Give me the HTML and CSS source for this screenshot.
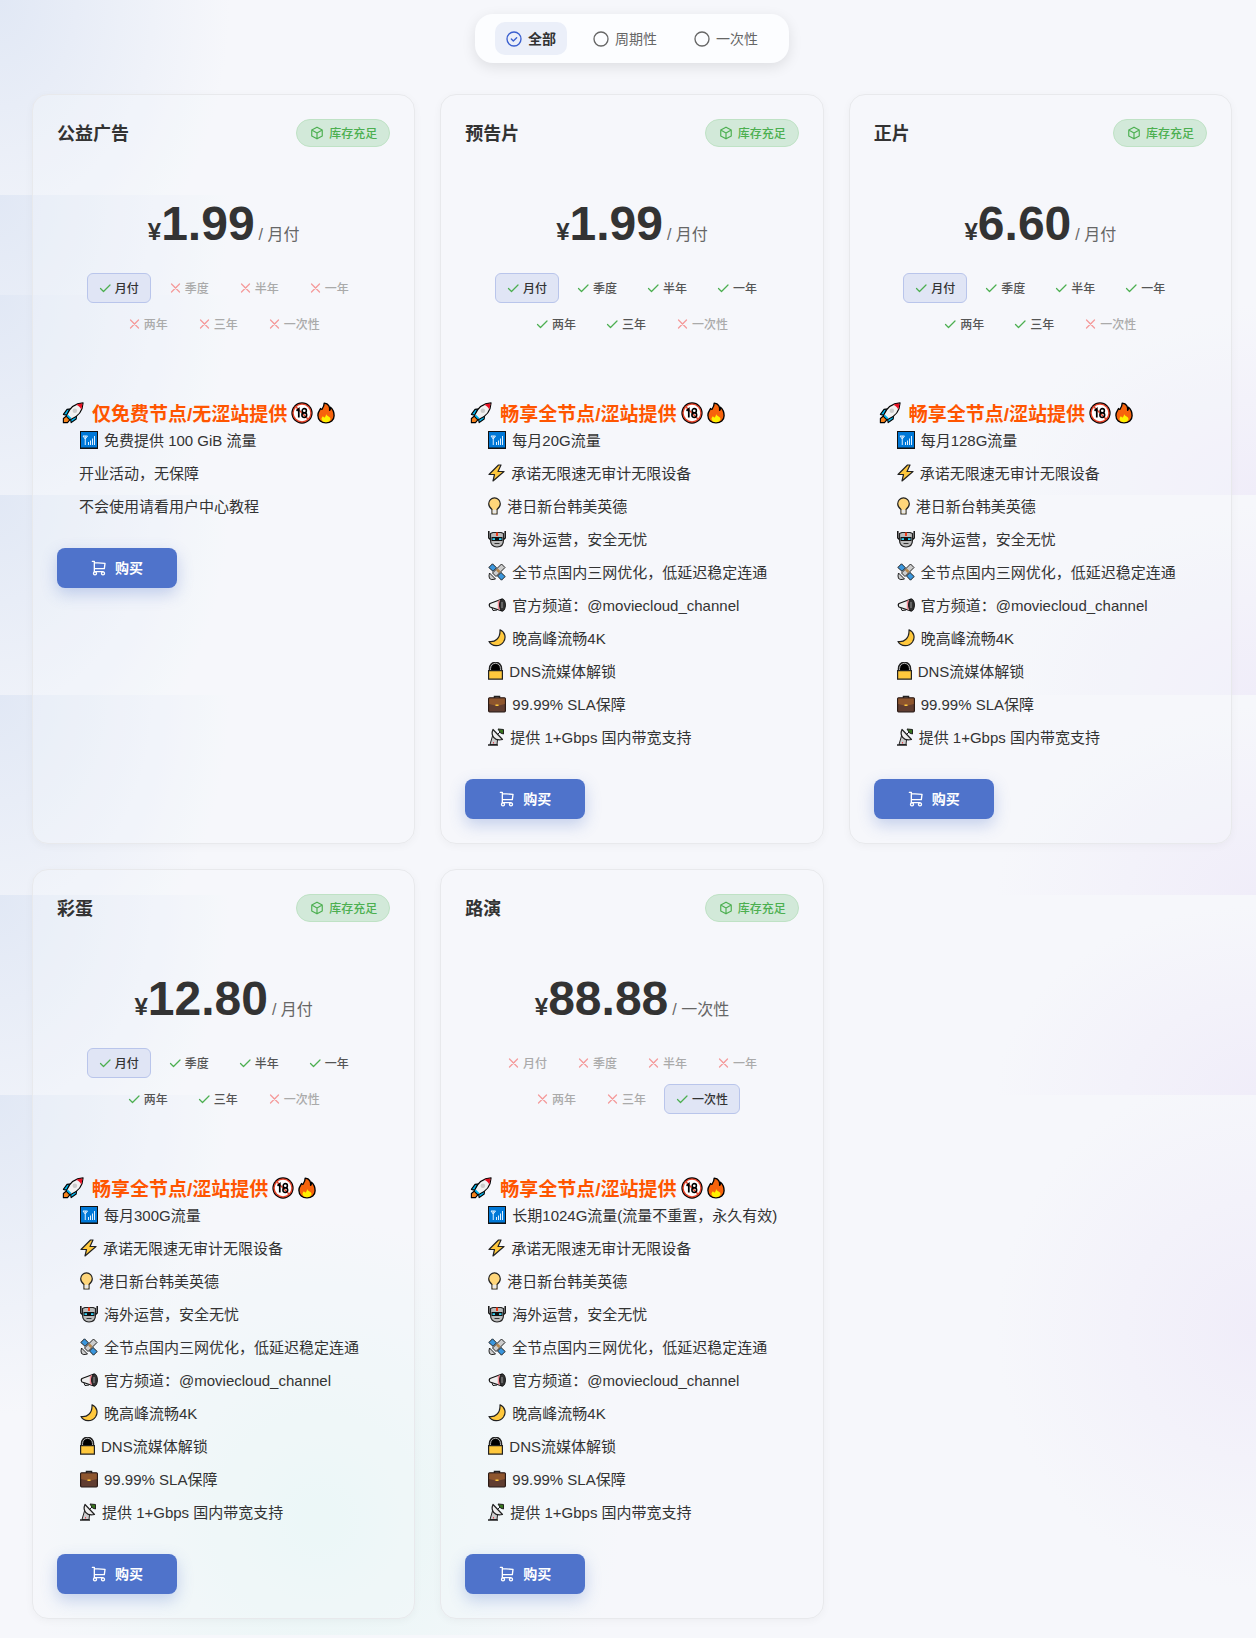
FILE: index.html
```html
<!DOCTYPE html>
<html lang="zh-CN">
<head>
    <meta charset="UTF-8">
    <meta name="viewport" content="width=device-width, initial-scale=1.0">
    <title>购买订阅</title>
    <link rel="stylesheet" href="styles.css">
</head>
<body>
    <!-- icon sprite -->
    <svg class="sprite" aria-hidden="true">
        <symbol id="i-circle" viewBox="0 0 24 24"><circle cx="12" cy="12" r="10.5"/></symbol>
        <symbol id="i-circle-check" viewBox="0 0 24 24"><circle cx="12" cy="12" r="10.5"/><path d="M8 12l3 3l5-5"/></symbol>
        <symbol id="i-check" viewBox="0 0 24 24"><path d="M3 13l6 6l13-13"/></symbol>
        <symbol id="i-x" viewBox="0 0 24 24"><path d="M21 4L5 20M5 4l16 16"/></symbol>
        <symbol id="i-box" viewBox="0 0 24 24"><path d="M12 2l9 5v10l-9 5l-9-5V7zM12 12l9-5M12 12v10M12 12L3 7"/></symbol>
        <symbol id="i-cart" viewBox="0 0 24 24"><circle cx="6" cy="20" r="2.3"/><circle cx="18" cy="20" r="2.3"/><path d="M18 17.500H5V2H2M5 4l16 1l-1 8H5"/></symbol>

        <symbol id="e-rocket" viewBox="0 0 24 24">
            <path d="M10 7.500L5.500 8L1.500 13.500L7 15zM16 14L15.500 18.500L10 22.500L9 17z" fill="#00b7f0" stroke="#000" stroke-width="1.200" stroke-linejoin="round"/>
            <path d="M4.500 15.500L1.500 18V22.500H6L8.500 19.500z" fill="#f7831c" stroke="#000" stroke-width="1.200" stroke-linejoin="round"/>
            <path d="M5 14.500C8 7 13 1.500 23 1C22.500 11 17 16 9.500 19z" fill="#f2f2f2" stroke="#000" stroke-width="1.200" stroke-linejoin="round"/>
            <path d="M15.500 3Q19 1.700 22.300 1.700Q22 5 21 8.500Q20 5 15.500 3Z" fill="#e81123"/>
            <circle cx="14" cy="9.500" r="2.500" fill="#ccc"/>
            <path d="M5.800 14.500L9.500 18.200" stroke="#00b7f0" stroke-width="2"/>
        </symbol>
        <symbol id="e-adult" viewBox="0 0 24 24">
            <circle cx="12" cy="12" r="11.600" fill="#000"/><circle cx="12" cy="12" r="10.600" fill="#e2432a"/><circle cx="12" cy="12" r="9" fill="#fff"/>
            <path d="M5.500 5.500L18.500 18.500" stroke="#e2432a" stroke-width="1.600"/>
            <path d="M6 9.500L8.500 7.500V17" fill="none" stroke="#000" stroke-width="1.900"/>
            <circle cx="14.500" cy="9.500" r="2.300" fill="none" stroke="#000" stroke-width="1.700"/><circle cx="14.500" cy="14.300" r="2.600" fill="none" stroke="#000" stroke-width="1.700"/>
        </symbol>
        <symbol id="e-fire" viewBox="0 0 20 24">
            <path d="M8 1C13 1.500 14.500 5 14 9C15 8.500 15 6.500 15 5.500C18 8 19 12 19 15C19 20 15 23 10 23C5 23 1 20 1 14.500C1 11 3 9 4 7C4.500 8 5 8 5.500 8C7 6 8 4 8 1Z" fill="#f7630c" stroke="#000" stroke-width="1.500" stroke-linejoin="round"/>
            <path d="M10 13C11 15.500 15 16 15 18.500C15 21 13 22.200 10 22.200C7 22.200 5 21 5 18.500C5 17 6 16.500 6.500 15.500C7.500 16.500 8 17 8.500 17C9.500 15.500 10 15 10 13Z" fill="#fff100"/>
        </symbol>
        <symbol id="e-signal" viewBox="0 0 18 18">
            <path d="M0 0H18V18H0z" fill="#111"/><path d="M1 1H17V16.500H1z" fill="#0078d7"/>
            <path d="M3 5H7.500M5.250 5V14M3 5L5.250 8L7.500 5M8.500 14V11M10.500 14V9.500M12.500 14V7.500M14.500 14V5" fill="none" stroke="#dff0ff"/>
        </symbol>
        <symbol id="e-bolt" viewBox="0 0 17 18"><path d="M10.500 1L1 10.500H6.500L5 17L16 7.500H10L13 1z" fill="#ffc83d" stroke="#222" stroke-width="1.200" stroke-linejoin="round"/></symbol>
        <symbol id="e-bulb" viewBox="0 0 13 18">
            <path d="M4 17V12.500C1.500 10.500 .7 9 .7 6.800A5.800 6 0 0 1 12.300 6.800C12.300 9 11.500 10.500 9 12.500V17z" fill="#ffd67a" stroke="#222" stroke-width="1.200"/>
            <path d="M4.600 12.700H8.400V16.400H4.600z" fill="#e8e8e8"/>
        </symbol>
        <symbol id="e-robot" viewBox="0 0 18 18">
            <path d="M.8 1V8L3 10M17.200 1V8L15 10" fill="none" stroke="#111" stroke-width="1.500"/>
            <path d="M2.500 3.500L5 2.500H13L15.500 3.500V10C15.500 14.500 13 17 9 17C5 17 2.500 14.500 2.500 10z" fill="#bbb" stroke="#222" stroke-width="1.200" stroke-linejoin="round"/>
            <path d="M3.500 7H14.500V11H3.500z" fill="#111"/><path d="M4.500 8.200H7V10H4.500zM11 8.200H13.500V10H11z" fill="#31d2f7"/>
            <path d="M8 2.500H10V6H8z" fill="#f03a17"/><path d="M6.500 13.500H11.500" stroke="#333"/>
        </symbol>
        <symbol id="e-satellite" viewBox="0 0 18 18">
            <path d="M4.500 .8L8.500 4.800L5 8.300L.8 4.500zM13 9.500L17.200 13.500L13.500 17.200L9.500 13z" fill="#3a96dd" stroke="#222" stroke-linejoin="round"/>
            <path d="M13.500 1L17 4.500L8 13.500L4.500 10zM1.500 10L7.500 16Q3 17.500 1.500 15.500Q.5 13 1.500 10z" fill="#ccc" stroke="#222" stroke-linejoin="round"/>
            <path d="M9 6.500L11.500 9" stroke="#b8874b" stroke-width="2.500"/>
        </symbol>
        <symbol id="e-horn" viewBox="0 0 18 18">
            <path d="M14 3L2 7.500Q.5 9 2 11L14 15z" fill="#eee" stroke="#111" stroke-width="1.200" stroke-linejoin="round"/>
            <path d="M4 12L5 14.500L9 14" fill="none" stroke="#111"/><path d="M9.800 5L12.500 4V14L9.800 13z" fill="#f38b95"/>
            <ellipse cx="14.500" cy="9" rx="2.900" ry="6" fill="#333" stroke="#111"/><path d="M14 6V12" stroke="#999"/>
        </symbol>
        <symbol id="e-moon" viewBox="0 0 18 18"><path d="M12 .8C17 3 18.500 8.500 15.500 13C12 18 4 18 1 12.500C7 13.500 12.500 9.500 12 .8Z" fill="#ffc83d" stroke="#222" stroke-width="1.200" stroke-linejoin="round"/></symbol>
        <symbol id="e-lock" viewBox="0 0 15 18">
            <path d="M2 9V6.500A5.500 5.800 0 0 1 13 6.500V9" fill="#000" stroke="#222" stroke-width="2.500"/><path d="M2.500 8.500V6.500A5 5.200 0 0 1 12.500 6.500V8.500" fill="none" stroke="#aaa"/>
            <path d="M.6 8.600H14.400V17.200H.6z" fill="#ffc83d" stroke="#222" stroke-width="1.200"/>
        </symbol>
        <symbol id="e-case" viewBox="0 0 18 18">
            <path d="M6.500 4V1.500H11.500V4" fill="none" stroke="#222" stroke-width="1.500"/>
            <rect x=".6" y="2.800" width="16.800" height="14" rx="1" fill="#603d30" stroke="#2b1a14" stroke-width="1.200"/>
            <path d="M1.200 3.500H16.800V9L9 11L1.200 9z" fill="#8e562e"/><path d="M7.500 9.500H10.500V11H7.500z" fill="#ffc83d"/>
        </symbol>
        <symbol id="e-dish" viewBox="0 0 16 18">
            <path d="M4.500 8L2 16.500H9L9.500 12z" fill="#ccc" stroke="#222" stroke-linejoin="round"/>
            <path d="M5 1.500C2.500 7 6 13.500 14.500 11.500z" fill="#eee" stroke="#222" stroke-width="1.200" stroke-linejoin="round"/>
            <path d="M9 7L12 4" stroke="#222"/><path d="M10 1L15.500 1.500V6L12.500 5z" fill="#38761d" stroke="#222"/><path d="M0 17H10" stroke="#222" stroke-width="1.500"/><path d="M5.500 14V15.500" stroke="#e74856"/>
        </symbol>
    </svg>

    <form class="filter">
        <label class="filter-item active"><input type="radio" name="type" checked><svg class="icon"><use href="#i-circle-check"/></svg><span>全部</span></label>
        <label class="filter-item"><input type="radio" name="type"><svg class="icon"><use href="#i-circle"/></svg><span>周期性</span></label>
        <label class="filter-item"><input type="radio" name="type"><svg class="icon"><use href="#i-circle"/></svg><span>一次性</span></label>
    </form>

    <main class="plans">
        <section class="card">
            <header class="card-header">
                <h2>公益广告</h2>
                <span class="stock"><svg class="icon"><use href="#i-box"/></svg><span>库存充足</span></span>
            </header>
            <div class="price"><span class="currency">¥</span><span class="amount">1.99</span><span class="cycle">/ 月付</span></div>
            <div class="periods">
                <button class="period selected"><svg class="icon"><use href="#i-check"/></svg><span>月付</span></button>
                <button class="period" disabled><svg class="icon"><use href="#i-x"/></svg><span>季度</span></button>
                <button class="period" disabled><svg class="icon"><use href="#i-x"/></svg><span>半年</span></button>
                <button class="period" disabled><svg class="icon"><use href="#i-x"/></svg><span>一年</span></button>
                <button class="period" disabled><svg class="icon"><use href="#i-x"/></svg><span>两年</span></button>
                <button class="period" disabled><svg class="icon"><use href="#i-x"/></svg><span>三年</span></button>
                <button class="period" disabled><svg class="icon"><use href="#i-x"/></svg><span>一次性</span></button>
            </div>
            <h3><svg class="emoji-lg rocket"><use href="#e-rocket"/></svg>仅免费节点/无涩站提供<svg class="emoji-lg"><use href="#e-adult"/></svg><svg class="emoji-lg fire"><use href="#e-fire"/></svg></h3>
            <ul class="features">
                <li><svg class="emoji"><use href="#e-signal"/></svg>免费提供 100 GiB 流量</li>
                <li>开业活动，无保障</li>
                <li>不会使用请看用户中心教程</li>
            </ul>
            <button class="buy"><svg class="icon"><use href="#i-cart"/></svg><span>购买</span></button>
        </section>

        <section class="card">
            <header class="card-header">
                <h2>预告片</h2>
                <span class="stock"><svg class="icon"><use href="#i-box"/></svg><span>库存充足</span></span>
            </header>
            <div class="price"><span class="currency">¥</span><span class="amount">1.99</span><span class="cycle">/ 月付</span></div>
            <div class="periods">
                <button class="period selected"><svg class="icon"><use href="#i-check"/></svg><span>月付</span></button>
                <button class="period"><svg class="icon"><use href="#i-check"/></svg><span>季度</span></button>
                <button class="period"><svg class="icon"><use href="#i-check"/></svg><span>半年</span></button>
                <button class="period"><svg class="icon"><use href="#i-check"/></svg><span>一年</span></button>
                <button class="period"><svg class="icon"><use href="#i-check"/></svg><span>两年</span></button>
                <button class="period"><svg class="icon"><use href="#i-check"/></svg><span>三年</span></button>
                <button class="period" disabled><svg class="icon"><use href="#i-x"/></svg><span>一次性</span></button>
            </div>
            <h3><svg class="emoji-lg rocket"><use href="#e-rocket"/></svg>畅享全节点/涩站提供<svg class="emoji-lg"><use href="#e-adult"/></svg><svg class="emoji-lg fire"><use href="#e-fire"/></svg></h3>
            <ul class="features">
                <li><svg class="emoji"><use href="#e-signal"/></svg>每月20G流量</li>
                <li><svg class="emoji bolt"><use href="#e-bolt"/></svg>承诺无限速无审计无限设备</li>
                <li><svg class="emoji bulb"><use href="#e-bulb"/></svg>港日新台韩美英德</li>
                <li><svg class="emoji"><use href="#e-robot"/></svg>海外运营，安全无忧</li>
                <li><svg class="emoji"><use href="#e-satellite"/></svg>全节点国内三网优化，低延迟稳定连通</li>
                <li><svg class="emoji"><use href="#e-horn"/></svg>官方频道：@moviecloud_channel</li>
                <li><svg class="emoji"><use href="#e-moon"/></svg>晚高峰流畅4K</li>
                <li><svg class="emoji lock"><use href="#e-lock"/></svg>DNS流媒体解锁</li>
                <li><svg class="emoji"><use href="#e-case"/></svg>99.99% SLA保障</li>
                <li><svg class="emoji dish"><use href="#e-dish"/></svg>提供 1+Gbps 国内带宽支持</li>
            </ul>
            <button class="buy"><svg class="icon"><use href="#i-cart"/></svg><span>购买</span></button>
        </section>

        <section class="card">
            <header class="card-header">
                <h2>正片</h2>
                <span class="stock"><svg class="icon"><use href="#i-box"/></svg><span>库存充足</span></span>
            </header>
            <div class="price"><span class="currency">¥</span><span class="amount">6.60</span><span class="cycle">/ 月付</span></div>
            <div class="periods">
                <button class="period selected"><svg class="icon"><use href="#i-check"/></svg><span>月付</span></button>
                <button class="period"><svg class="icon"><use href="#i-check"/></svg><span>季度</span></button>
                <button class="period"><svg class="icon"><use href="#i-check"/></svg><span>半年</span></button>
                <button class="period"><svg class="icon"><use href="#i-check"/></svg><span>一年</span></button>
                <button class="period"><svg class="icon"><use href="#i-check"/></svg><span>两年</span></button>
                <button class="period"><svg class="icon"><use href="#i-check"/></svg><span>三年</span></button>
                <button class="period" disabled><svg class="icon"><use href="#i-x"/></svg><span>一次性</span></button>
            </div>
            <h3><svg class="emoji-lg rocket"><use href="#e-rocket"/></svg>畅享全节点/涩站提供<svg class="emoji-lg"><use href="#e-adult"/></svg><svg class="emoji-lg fire"><use href="#e-fire"/></svg></h3>
            <ul class="features">
                <li><svg class="emoji"><use href="#e-signal"/></svg>每月128G流量</li>
                <li><svg class="emoji bolt"><use href="#e-bolt"/></svg>承诺无限速无审计无限设备</li>
                <li><svg class="emoji bulb"><use href="#e-bulb"/></svg>港日新台韩美英德</li>
                <li><svg class="emoji"><use href="#e-robot"/></svg>海外运营，安全无忧</li>
                <li><svg class="emoji"><use href="#e-satellite"/></svg>全节点国内三网优化，低延迟稳定连通</li>
                <li><svg class="emoji"><use href="#e-horn"/></svg>官方频道：@moviecloud_channel</li>
                <li><svg class="emoji"><use href="#e-moon"/></svg>晚高峰流畅4K</li>
                <li><svg class="emoji lock"><use href="#e-lock"/></svg>DNS流媒体解锁</li>
                <li><svg class="emoji"><use href="#e-case"/></svg>99.99% SLA保障</li>
                <li><svg class="emoji dish"><use href="#e-dish"/></svg>提供 1+Gbps 国内带宽支持</li>
            </ul>
            <button class="buy"><svg class="icon"><use href="#i-cart"/></svg><span>购买</span></button>
        </section>

        <section class="card">
            <header class="card-header">
                <h2>彩蛋</h2>
                <span class="stock"><svg class="icon"><use href="#i-box"/></svg><span>库存充足</span></span>
            </header>
            <div class="price"><span class="currency">¥</span><span class="amount">12.80</span><span class="cycle">/ 月付</span></div>
            <div class="periods">
                <button class="period selected"><svg class="icon"><use href="#i-check"/></svg><span>月付</span></button>
                <button class="period"><svg class="icon"><use href="#i-check"/></svg><span>季度</span></button>
                <button class="period"><svg class="icon"><use href="#i-check"/></svg><span>半年</span></button>
                <button class="period"><svg class="icon"><use href="#i-check"/></svg><span>一年</span></button>
                <button class="period"><svg class="icon"><use href="#i-check"/></svg><span>两年</span></button>
                <button class="period"><svg class="icon"><use href="#i-check"/></svg><span>三年</span></button>
                <button class="period" disabled><svg class="icon"><use href="#i-x"/></svg><span>一次性</span></button>
            </div>
            <h3><svg class="emoji-lg rocket"><use href="#e-rocket"/></svg>畅享全节点/涩站提供<svg class="emoji-lg"><use href="#e-adult"/></svg><svg class="emoji-lg fire"><use href="#e-fire"/></svg></h3>
            <ul class="features">
                <li><svg class="emoji"><use href="#e-signal"/></svg>每月300G流量</li>
                <li><svg class="emoji bolt"><use href="#e-bolt"/></svg>承诺无限速无审计无限设备</li>
                <li><svg class="emoji bulb"><use href="#e-bulb"/></svg>港日新台韩美英德</li>
                <li><svg class="emoji"><use href="#e-robot"/></svg>海外运营，安全无忧</li>
                <li><svg class="emoji"><use href="#e-satellite"/></svg>全节点国内三网优化，低延迟稳定连通</li>
                <li><svg class="emoji"><use href="#e-horn"/></svg>官方频道：@moviecloud_channel</li>
                <li><svg class="emoji"><use href="#e-moon"/></svg>晚高峰流畅4K</li>
                <li><svg class="emoji lock"><use href="#e-lock"/></svg>DNS流媒体解锁</li>
                <li><svg class="emoji"><use href="#e-case"/></svg>99.99% SLA保障</li>
                <li><svg class="emoji dish"><use href="#e-dish"/></svg>提供 1+Gbps 国内带宽支持</li>
            </ul>
            <button class="buy"><svg class="icon"><use href="#i-cart"/></svg><span>购买</span></button>
        </section>

        <section class="card">
            <header class="card-header">
                <h2>路演</h2>
                <span class="stock"><svg class="icon"><use href="#i-box"/></svg><span>库存充足</span></span>
            </header>
            <div class="price"><span class="currency">¥</span><span class="amount">88.88</span><span class="cycle">/ 一次性</span></div>
            <div class="periods">
                <button class="period" disabled><svg class="icon"><use href="#i-x"/></svg><span>月付</span></button>
                <button class="period" disabled><svg class="icon"><use href="#i-x"/></svg><span>季度</span></button>
                <button class="period" disabled><svg class="icon"><use href="#i-x"/></svg><span>半年</span></button>
                <button class="period" disabled><svg class="icon"><use href="#i-x"/></svg><span>一年</span></button>
                <button class="period" disabled><svg class="icon"><use href="#i-x"/></svg><span>两年</span></button>
                <button class="period" disabled><svg class="icon"><use href="#i-x"/></svg><span>三年</span></button>
                <button class="period selected"><svg class="icon"><use href="#i-check"/></svg><span>一次性</span></button>
            </div>
            <h3><svg class="emoji-lg rocket"><use href="#e-rocket"/></svg>畅享全节点/涩站提供<svg class="emoji-lg"><use href="#e-adult"/></svg><svg class="emoji-lg fire"><use href="#e-fire"/></svg></h3>
            <ul class="features">
                <li><svg class="emoji"><use href="#e-signal"/></svg>长期1024G流量(流量不重置，永久有效)</li>
                <li><svg class="emoji bolt"><use href="#e-bolt"/></svg>承诺无限速无审计无限设备</li>
                <li><svg class="emoji bulb"><use href="#e-bulb"/></svg>港日新台韩美英德</li>
                <li><svg class="emoji"><use href="#e-robot"/></svg>海外运营，安全无忧</li>
                <li><svg class="emoji"><use href="#e-satellite"/></svg>全节点国内三网优化，低延迟稳定连通</li>
                <li><svg class="emoji"><use href="#e-horn"/></svg>官方频道：@moviecloud_channel</li>
                <li><svg class="emoji"><use href="#e-moon"/></svg>晚高峰流畅4K</li>
                <li><svg class="emoji lock"><use href="#e-lock"/></svg>DNS流媒体解锁</li>
                <li><svg class="emoji"><use href="#e-case"/></svg>99.99% SLA保障</li>
                <li><svg class="emoji dish"><use href="#e-dish"/></svg>提供 1+Gbps 国内带宽支持</li>
            </ul>
            <button class="buy"><svg class="icon"><use href="#i-cart"/></svg><span>购买</span></button>
        </section>
    </main>
</body>
</html>
```
FILE: styles.css
```css
:root {
    --blue: radial-gradient(ellipse 230px 320px at 0 0, #e1e8f5, rgba(225, 232, 245, 0));
    --purple: radial-gradient(ellipse 260px 190px at 100% 100%, #f0edf9, rgba(240, 237, 249, 0));
}

* {
    box-sizing: border-box;
}

body {
    margin: 0;
    padding: 14px 24px 16px 32px;
    font-family: "Liberation Sans", "Noto Sans CJK SC", sans-serif;
    color: #333;
    background-color: #f6f7fb;
    /* soft glow bands on both edges, green glow at the bottom */
    background-image:
        var(--blue), var(--blue), var(--blue), var(--blue), var(--blue), var(--blue), var(--blue),
        var(--purple), var(--purple), var(--purple), var(--purple),
        radial-gradient(circle 260px at 100% 1330px, #f0edf9, rgba(240, 237, 249, 0)),
        radial-gradient(circle 300px at 320px 1520px, #e8f6f5, rgba(232, 246, 245, 0));
    background-position:
        0 0, 0 195px, 0 295px, 0 495px, 0 695px, 0 895px, 0 1095px,
        0 295px, 0 495px, 0 695px, 0 895px,
        0 0, 0 0;
    background-size:
        100% 195px, 100% 100px, 100% 200px, 100% 200px, 100% 200px, 100% 200px, 100% 320px,
        100% 200px, 100% 200px, 100% 200px, 100% 200px,
        100% 100%, 100% 100%;
    background-repeat: no-repeat;
}

button {
    font-family: inherit;
    cursor: pointer;
}

.sprite {
    display: none;
}

.icon {
    flex: none;
    fill: none;
    stroke: currentColor;
    stroke-width: 2;
    stroke-linecap: round;
    stroke-linejoin: round;
}

/* the CJK glyphs sit low in their line, lift the labels a little */
.filter-item span,
.stock span,
.period span,
.buy span,
.card-header h2 {
    padding-bottom: 2px;
}

/* filter bar */
.filter {
    display: flex;
    gap: 15px;
    width: fit-content;
    margin: 0 auto 31px;
    padding: 8px 20px;
    border-radius: 18px;
    background-color: #fcfdff;
    box-shadow: 0 4px 14px rgba(0, 0, 0, 0.1);
}

.filter-item {
    display: flex;
    align-items: center;
    gap: 6px;
    height: 33px;
    padding: 0 11px;
    border-radius: 10px;
    font-size: 14px;
    color: #666;
    cursor: pointer;
}

.filter-item input {
    appearance: none;
    width: 0;
    height: 0;
    margin: 0 -6px 0 0;
}

.filter-item .icon {
    width: 16px;
    height: 16px;
}

.filter-item.active {
    background-color: #ebeff9;
    color: #333;
    font-weight: bold;
}

.filter-item.active .icon {
    color: #3a5fcf;
}

/* plan cards */
.plans {
    display: grid;
    grid-template-columns: repeat(auto-fill, minmax(360px, 1fr));
    gap: 25px;
}

.card {
    padding: 24px;
    border: 1px solid #e8e9ec;
    border-radius: 16px;
    background-color: rgba(246, 247, 251, 0.3);
    box-shadow: 0 2px 8px rgba(0, 0, 0, 0.04);
}

.card-header {
    display: flex;
    justify-content: space-between;
    align-items: center;
    height: 28px;
}

.card-header h2 {
    margin: 0;
    font-size: 18px;
    font-weight: 600;
}

.stock {
    display: flex;
    align-items: center;
    gap: 5px;
    height: 28px;
    padding: 0 12px 0 13px;
    border: 1px solid #bfe2c5;
    border-radius: 14px;
    background-color: #d2e9d9;
    color: #4caf50;
    font-size: 12px;
    font-weight: 500;
}

.stock .icon {
    width: 14px;
    height: 14px;
}

.price {
    display: flex;
    justify-content: center;
    align-items: baseline;
    height: 58px;
    margin-top: 48px;
    font-weight: bold;
}

.currency {
    font-size: 24px;
}

.amount {
    font-size: 48px;
    line-height: 58px;
}

.cycle {
    margin-left: 4px;
    font-size: 16px;
    font-weight: normal;
    color: #666;
}

.periods {
    display: flex;
    flex-wrap: wrap;
    justify-content: center;
    gap: 6px;
    margin-top: 20px;
}

.period {
    display: flex;
    align-items: center;
    gap: 4px;
    height: 30px;
    padding: 0 11px;
    border: 1px solid transparent;
    border-radius: 6px;
    background-color: transparent;
    color: #555;
    font-size: 12px;
    font-weight: 500;
}

.period .icon {
    width: 12px;
    height: 12px;
    stroke-width: 2.5;
    color: #4caf50;
}

.period.selected {
    border-color: #b9c5eb;
    background-color: #e0e5f5;
    color: #333;
}

.period:disabled {
    color: #aaa;
    cursor: not-allowed;
}

.period:disabled .icon {
    color: #f59a9a;
}

.card h3 {
    display: flex;
    align-items: center;
    height: 24px;
    margin: 61px 0 0;
    padding-left: 5px;
    font-size: 19px;
    font-weight: bold;
    color: #ff5500;
}

.emoji-lg {
    width: 22px;
    height: 22px;
    margin: 2px 0 0 4px;
}

.emoji-lg.rocket {
    margin: 2px 8px 0 0;
}

.emoji-lg.fire {
    width: 18px;
}

.features {
    margin: 0;
    padding: 0 0 0 22px;
    list-style: none;
    font-size: 15px;
}

.features li {
    display: flex;
    align-items: center;
    height: 33px;
    margin-top: 0;
    padding-bottom: 2px;
    white-space: nowrap;
}

.emoji {
    flex: none;
    width: 18px;
    height: 18px;
    margin: 0 6px 0 1px;
}

.emoji.bolt {
    width: 17px;
}

.emoji.bulb {
    width: 13px;
}

.emoji.lock {
    width: 15px;
}

.emoji.dish {
    width: 16px;
}

.buy {
    display: flex;
    justify-content: center;
    align-items: center;
    gap: 8px;
    width: 120px;
    height: 40px;
    margin-top: 25px;
    border: none;
    border-radius: 8px;
    background-color: #4f73cb;
    box-shadow: 0 6px 16px rgba(79, 115, 203, 0.3);
    color: #fff;
    font-size: 14px;
    font-weight: bold;
}

.buy .icon {
    width: 16px;
    height: 16px;
}
```
